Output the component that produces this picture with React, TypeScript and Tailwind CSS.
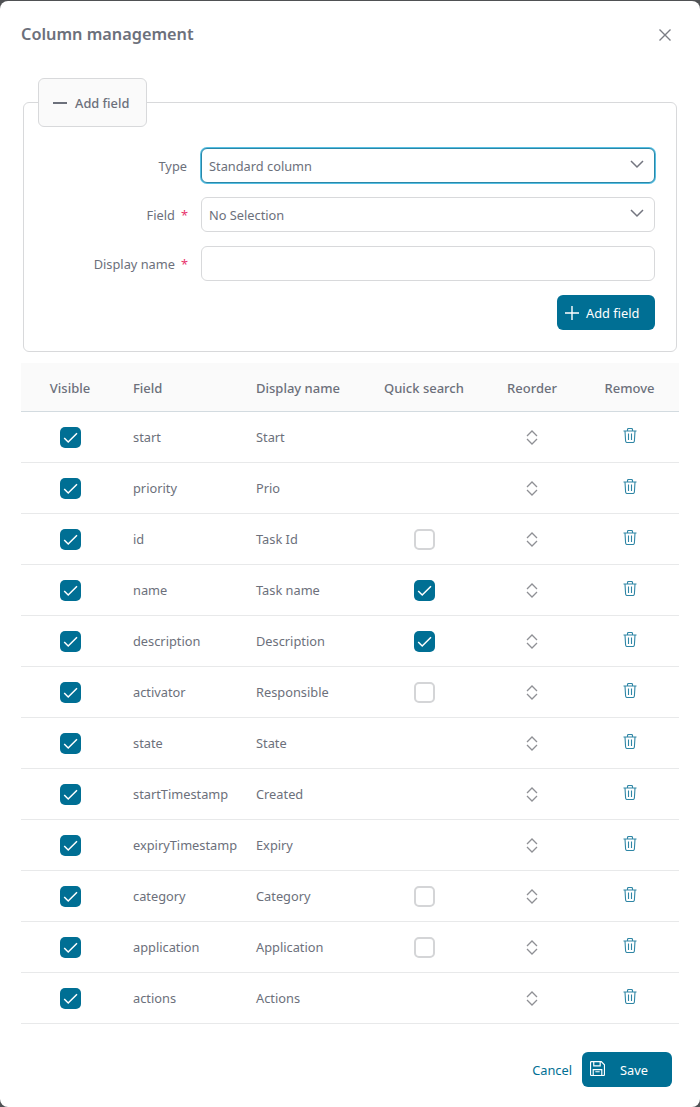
import React from "react";

const rows: [string, string, null | boolean][] = [
  ["start", "Start", null],
  ["priority", "Prio", null],
  ["id", "Task Id", false],
  ["name", "Task name", true],
  ["description", "Description", true],
  ["activator", "Responsible", false],
  ["state", "State", null],
  ["startTimestamp", "Created", null],
  ["expiryTimestamp", "Expiry", null],
  ["category", "Category", false],
  ["application", "Application", false],
  ["actions", "Actions", null],
];

const gridCols = "grid grid-cols-[98px_123px_128px_114px_96px_99px]";

function Check({ on }: { on: boolean }) {
  if (!on) return <div className="w-[21px] h-[21px] rounded-[5px] border-2 border-[#d4d5d7] bg-white" />;
  return (
    <div className="w-[21px] h-[21px] rounded-[5px] bg-[#006f94] flex items-center justify-center">
      <svg width="15" height="15" viewBox="0 0 15 15" fill="none" stroke="#fff" strokeWidth="1.5">
        <path d="M1.2 8l4 4L14 3.2" />
      </svg>
    </div>
  );
}

function Chevron() {
  return (
    <svg width="14" height="9" viewBox="0 0 14 9" fill="none" stroke="#73757f" strokeWidth="1.5" className="mb-[2px]">
      <path d="M1 1l6 6 6-6" />
    </svg>
  );
}

function Reorder() {
  return (
    <svg width="12" height="15" viewBox="0 0 12 15" fill="none" stroke="#8f9095" strokeWidth="1.3">
      <path d="M1 6l5-5 5 5M1 9l5 5 5-5" />
    </svg>
  );
}

function Trash() {
  return (
    <svg width="14" height="15" viewBox="0 0 14 15" fill="none" stroke="#2f86a5" strokeWidth="1.1">
      <path d="M.5 3h13M4.5 3V1.5q0-1 1-1h3q1 0 1 1V3M2 3l.6 10q.1 1.5 1.5 1.5h5.8q1.4 0 1.5-1.5L12 3M5.5 5.5v6.5M8.5 5.5v6.5" />
    </svg>
  );
}

function Select({ value, focus }: { value: string; focus?: boolean }) {
  return (
    <div
      className={
        "w-[454px] h-[35px] flex items-center justify-between pl-[7px] pr-[10px] bg-white rounded-[6px] border " +
        (focus ? "border-[#2a87a8] shadow-[0_0_0_1px_#55bfe3]" : "border-[#d8d9db]")
      }
    >
      <span className="pt-[2px]">{value}</span>
      <Chevron />
    </div>
  );
}

function Label({ text, req }: { text: string; req?: boolean }) {
  return (
    <div className={"w-[164px] text-right pt-[2px] shrink-0 " + (req ? "" : "pr-px")}>
      {text}
      {req && <span className="text-[#e8356d] ml-[6px]">*</span>}
    </div>
  );
}

export default function App() {
  return (
    <div className="w-[700px] h-[1107px] bg-[#4f5154] pt-px overflow-hidden font-['Noto_Sans',sans-serif] text-[12.8px] text-[#6c707b]">
      <div className="h-[1106px] bg-white rounded-[8px] flex flex-col">
        <div className="flex justify-between pl-[21px] pr-[28px] pt-[20px] h-[101px] shrink-0">
          <h1 className="text-[16.3px] font-semibold leading-[26px] text-[#6c707b]">Column management</h1>
          <svg width="14" height="14" viewBox="0 0 14 14" fill="none" stroke="#7b7d85" strokeWidth="1.4" className="mt-[7px]">
            <path d="M1.5 1.5l11 11M12.5 1.5l-11 11" />
          </svg>
        </div>

        <div className="relative mx-[23px] h-[250px] border border-[#d8d9db] rounded-[6px] pt-[45px] pr-[21px] shrink-0">
          <div className="absolute left-[14px] top-[-25px] w-[109px] h-[49px] bg-[#fafafa] border border-[#d8d9db] rounded-[6px] flex items-center pl-[14px] gap-[8px] font-medium">
            <span className="block w-[14px] h-[2px] bg-[#6c707b]" />
            <span className="pt-[2px]">Add field</span>
          </div>
          <div className="flex flex-col gap-[14px]">
            <div className="flex items-center gap-[13px]">
              <Label text="Type" />
              <Select value="Standard column" focus />
            </div>
            <div className="flex items-center gap-[13px]">
              <Label text="Field" req />
              <Select value="No Selection" />
            </div>
            <div className="flex items-center gap-[13px]">
              <Label text="Display name" req />
              <div className="w-[454px] h-[35px] bg-white rounded-[6px] border border-[#d8d9db]" />
            </div>
            <div className="flex justify-end">
              <div className="w-[98px] h-[35px] rounded-[6px] bg-[#006f94] text-white flex items-center pl-[7px] gap-[6px]">
                <svg width="16" height="16" viewBox="0 0 16 16" fill="none" stroke="#fff" strokeWidth="1.4">
                  <path d="M8 1v14M1 8h14" />
                </svg>
                <span className="pt-[2px]">Add field</span>
              </div>
            </div>
          </div>
        </div>

        <div className="mx-[21px] mt-[11px] w-[658px] shrink-0">
          <div className={gridCols + " h-[49px] items-center bg-[#fafafa] border-b border-[#d3dbe0] font-medium text-[13px] pt-[3px]"}>
            <div className="text-center">Visible</div>
            <div className="pl-[14px]">Field</div>
            <div className="pl-[14px]">Display name</div>
            <div className="pl-[14px]">Quick search</div>
            <div className="text-center">Reorder</div>
            <div className="text-center">Remove</div>
          </div>
          {rows.map(([f, d, q]) => (
            <div key={f} className={gridCols + " h-[51px] items-center border-b border-[#e8e9ea]"}>
              <div className="flex justify-center"><Check on /></div>
              <div className="pl-[14px] pt-[2px]">{f}</div>
              <div className="pl-[14px] pt-[2px]">{d}</div>
              <div className="pl-[44px]">{q !== null && <Check on={q} />}</div>
              <div className="flex justify-center"><Reorder /></div>
              <div className="flex justify-center pb-[4px]"><Trash /></div>
            </div>
          ))}
        </div>

        <div className="flex items-center justify-end gap-[10px] pr-[28px] mt-[28px]">
          <span className="text-[#006f94] pt-[2px]">Cancel</span>
          <div className="w-[90px] h-[35px] rounded-[6px] bg-[#006f94] text-white flex items-center pl-[8px] gap-[15px]">
            <svg width="15" height="15" viewBox="0 0 14 14" fill="none" stroke="#fff" strokeWidth="1.1" className="mb-[2px]">
              <path d="M.5 1.5q0-1 1-1h9l3 3v9q0 1-1 1h-11q-1 0-1-1zM3.5.5v4h6v-4M3 13.5V8h8v5.5M5 10h4" />
            </svg>
            <span className="pt-[2px]">Save</span>
          </div>
        </div>
      </div>
    </div>
  );
}
